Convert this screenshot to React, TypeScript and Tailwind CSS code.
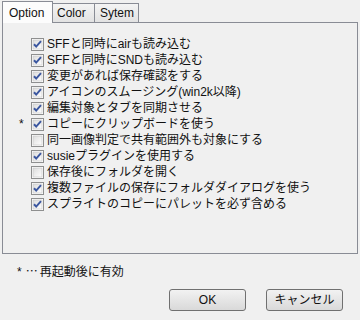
import React from "react";

const items: { label: string; checked: boolean; star?: boolean }[] = [
  { label: "SFFと同時にairも読み込む", checked: true },
  { label: "SFFと同時にSNDも読み込む", checked: true },
  { label: "変更があれば保存確認をする", checked: true },
  { label: "アイコンのスムージング(win2k以降)", checked: true },
  { label: "編集対象とタブを同期させる", checked: true },
  { label: "コピーにクリップボードを使う", checked: true, star: true },
  { label: "同一画像判定で共有範囲外も対象にする", checked: false },
  { label: "susieプラグインを使用する", checked: true },
  { label: "保存後にフォルダを開く", checked: false },
  { label: "複数ファイルの保存にフォルダダイアログを使う", checked: true },
  { label: "スプライトのコピーにパレットを必ず含める", checked: true },
];

function CheckBox({ checked }: { checked: boolean }) {
  return (
    <svg width="13" height="13" viewBox="0 0 13 13" className="shrink-0">
      <defs>
        <linearGradient id="cbg" x1="0" y1="0" x2="1" y2="1">
          <stop offset="0" stopColor="#dcdcdc" />
          <stop offset="1" stopColor="#ffffff" />
        </linearGradient>
      </defs>
      <rect x="0.5" y="0.5" width="12" height="12" fill="#ffffff" stroke="#8e8f8f" />
      <rect x="2" y="2" width="9" height="9" fill="url(#cbg)" stroke="#c4c4c4" strokeWidth="0.6" />
      {checked && (
        <path d="M3 6.2 L5.2 8.6 L10 3.2" fill="none" stroke="#3b57a0" strokeWidth="2" strokeLinejoin="miter" />
      )}
    </svg>
  );
}

export default function App() {
  return (
    <div className="w-[360px] h-[320px] bg-[#f0f0f0] pt-px text-[12px] leading-[16px] text-[#111] font-['Liberation_Sans','Noto_Sans_CJK_JP',sans-serif] overflow-hidden">
      <div className="flex items-end h-[21px] pl-[2px]">
        <div className="relative z-10 h-[22px] -mb-px w-[51px] bg-[#fcfcfc] border-x border-t border-[#898c95] pl-[6px] pt-[3px] text-[12px]">
          Option
        </div>
        <div className="h-[19px] w-[42px] border-t border-r border-[#898c95] bg-gradient-to-b from-[#f4f4f4] to-[#e2e2e2] pl-[4px] pt-[1px] text-[12px]">
          Color
        </div>
        <div className="h-[19px] w-[44px] border-t border-r border-[#898c95] bg-gradient-to-b from-[#f4f4f4] to-[#e2e2e2] pl-[5px] pt-[1px] text-[12px]">
          Sytem
        </div>
      </div>
      <div className="mx-[2px] h-[232px] border border-[#898c95] bg-[#f0f0f0] pt-[13px]">
        {items.map((it) => (
          <div key={it.label} className="flex items-center h-[16px]">
            <div className="w-[28px] pl-[16px] shrink-0">{it.star ? "*" : ""}</div>
            <CheckBox checked={it.checked} />
            <span className="ml-[3px] whitespace-nowrap">{it.label}</span>
          </div>
        ))}
      </div>
      <div className="mt-[9px] h-[16px] pl-[17px] whitespace-nowrap">
        *<span className="ml-[4px] mr-[2px] font-['Noto_Sans_CJK_JP',sans-serif]">…</span>再起動後に有効
      </div>
      <div className="mt-[10px] flex justify-end gap-[20px] pr-[17px]">
        <button className="w-[77px] h-[22px] rounded-[3px] border border-[#707070] bg-gradient-to-b from-[#f2f2f2] to-[#d9d9d9] text-[12px]">
          OK
        </button>
        <button className="w-[77px] h-[22px] rounded-[3px] border border-[#707070] bg-gradient-to-b from-[#f2f2f2] to-[#d9d9d9] text-[12px]">
          キャンセル
        </button>
      </div>
    </div>
  );
}
